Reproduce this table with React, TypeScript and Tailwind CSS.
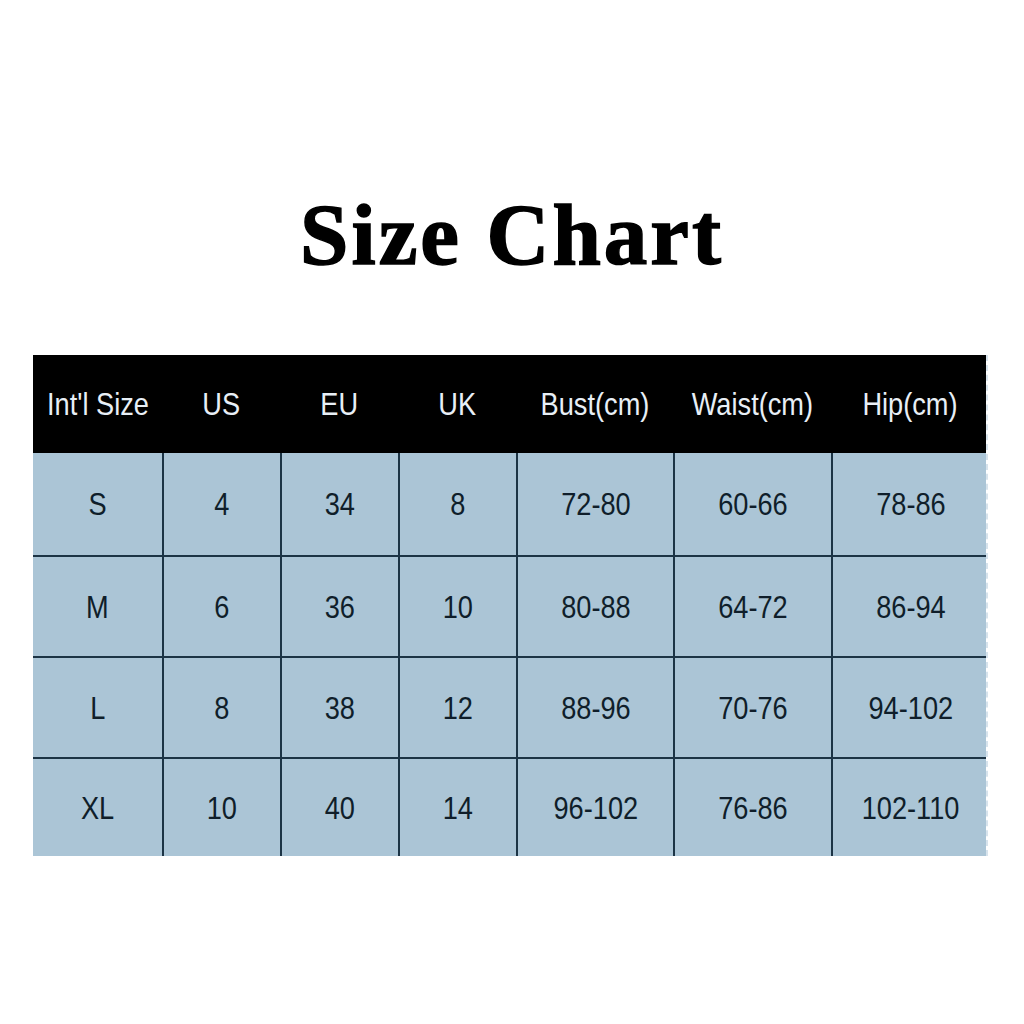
const headers = ["Int'l Size", "US", "EU", "UK", "Bust(cm)", "Waist(cm)", "Hip(cm)"];

const rows = [
  ["S", "4", "34", "8", "72-80", "60-66", "78-86"],
  ["M", "6", "36", "10", "80-88", "64-72", "86-94"],
  ["L", "8", "38", "12", "88-96", "70-76", "94-102"],
  ["XL", "10", "40", "14", "96-102", "76-86", "102-110"],
];

const rowHeights = ["h-[102px]", "h-[101px]", "h-[101px]", "h-[99px]"];

export default function App() {
  return (
    <div className="w-[1024px] h-[1024px] bg-white overflow-hidden">
      {/* Title */}
      <h1 className="pt-[191px] text-center text-[87px] leading-none font-bold tracking-[3px] text-black [-webkit-text-stroke:1.5px_black] [font-family:'Liberation_Serif',serif]">
        Size Chart
      </h1>

      {/* Table */}
      <div className="mt-[77px] ml-[33px] w-[955px] border-r-2 border-dashed border-[#d7e3ec] [font-family:'Liberation_Sans',Arial,sans-serif]">
        <div className="grid grid-cols-[129px_118px_118px_118px_157px_158px_157px] h-[98px] bg-black">
          {headers.map((h) => (
            <div key={h} className="flex items-center justify-center">
              <span className="inline-block scale-x-[0.85] text-[32px] leading-none text-[#e8eff6] whitespace-nowrap">
                {h}
              </span>
            </div>
          ))}
        </div>
        {rows.map((row, ri) => (
          <div
            key={ri}
            className={
              "grid grid-cols-[129px_118px_118px_118px_157px_158px_157px] bg-[#abc5d6] " +
              rowHeights[ri] +
              (ri === 0 ? "" : " border-t-2 border-[#1c3445]")
            }
          >
            {row.map((cell, ci) => (
              <div
                key={ci}
                className={
                  "flex items-center justify-center " +
                  (ci > 0 ? "border-l-2 border-[#1c3445]" : "")
                }
              >
                <span className="inline-block scale-x-[0.85] text-[32px] leading-none text-[#0f1e2a] whitespace-nowrap">
                  {cell}
                </span>
              </div>
            ))}
          </div>
        ))}
      </div>
    </div>
  );
}
